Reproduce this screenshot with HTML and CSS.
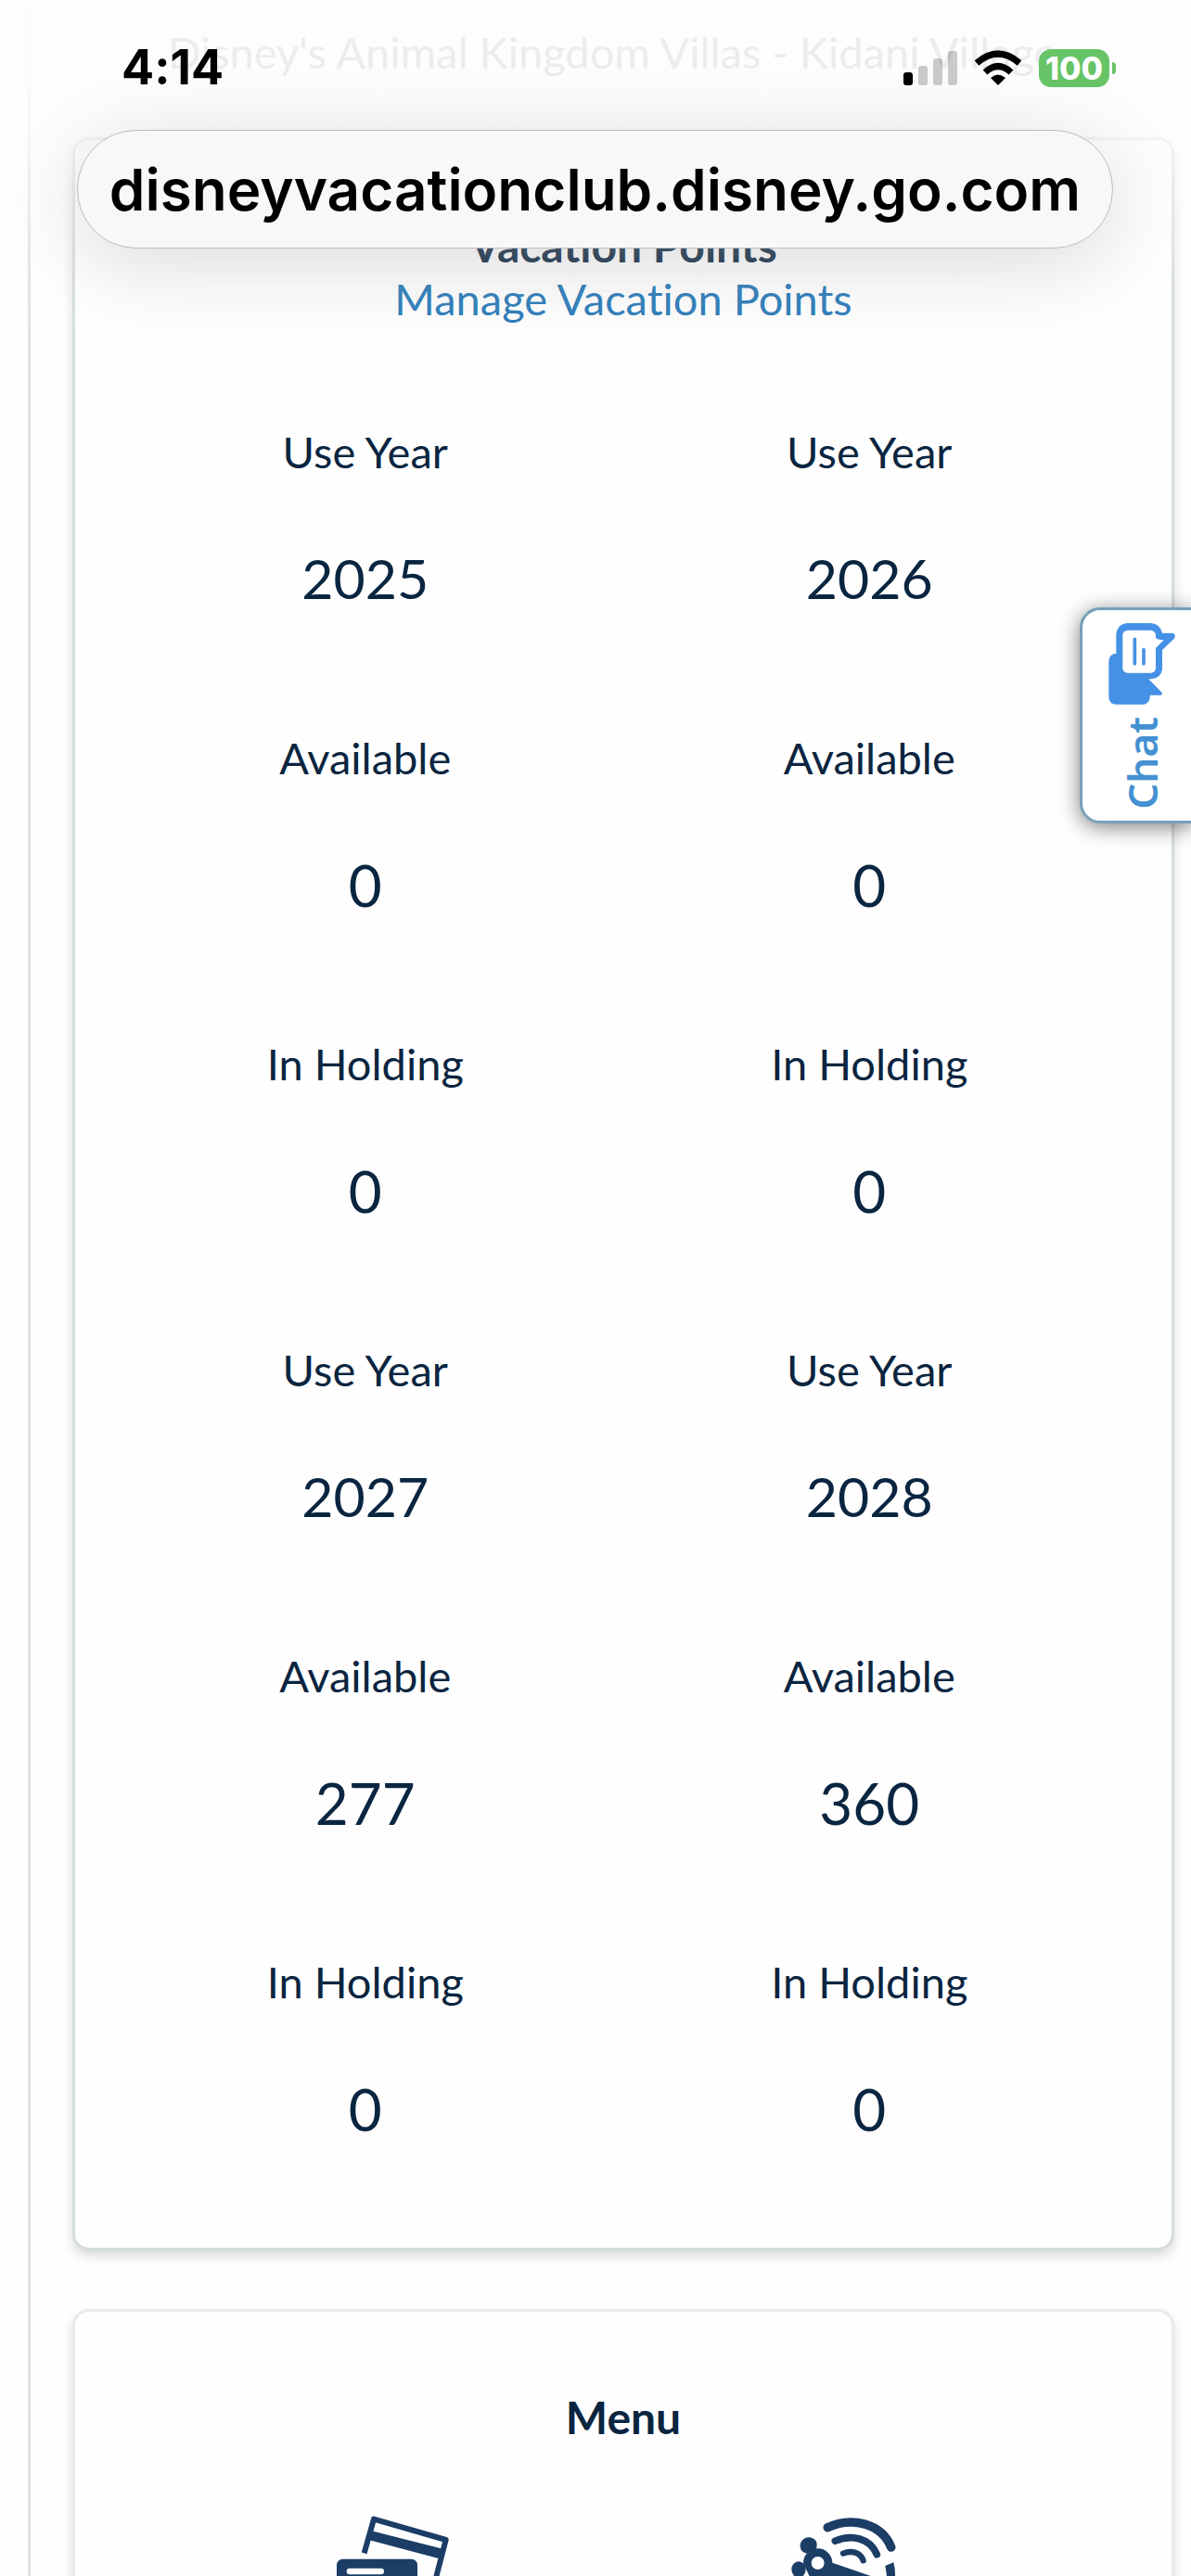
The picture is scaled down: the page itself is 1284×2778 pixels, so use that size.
FILE: index.html
```html
<!DOCTYPE html>
<html lang="en">
<head>
    <meta charset="UTF-8">
    <meta name="viewport" content="width=device-width, initial-scale=1.0">
    <title>Disney Vacation Club</title>

    <link rel="stylesheet" href="styles.css">
</head>
<body>
    <main class="page">
        <p class="resort">Disney's Animal Kingdom Villas - Kidani Village</p>

        <section class="card points">
            <h2>Vacation Points</h2>
            <a class="manage" href="#">Manage Vacation Points</a>

            <div class="years">
                <dl>
                    <dt>Use Year</dt>
                    <dd class="year">2025</dd>
                    <dt>Available</dt>
                    <dd>0</dd>
                    <dt>In Holding</dt>
                    <dd>0</dd>
                </dl>
                <dl>
                    <dt>Use Year</dt>
                    <dd class="year">2026</dd>
                    <dt>Available</dt>
                    <dd>0</dd>
                    <dt>In Holding</dt>
                    <dd>0</dd>
                </dl>
                <dl>
                    <dt>Use Year</dt>
                    <dd class="year">2027</dd>
                    <dt>Available</dt>
                    <dd>277</dd>
                    <dt>In Holding</dt>
                    <dd>0</dd>
                </dl>
                <dl>
                    <dt>Use Year</dt>
                    <dd class="year">2028</dd>
                    <dt>Available</dt>
                    <dd>360</dd>
                    <dt>In Holding</dt>
                    <dd>0</dd>
                </dl>
            </div>
        </section>

        <section class="card menu">
            <h2>Menu</h2>
            <nav class="menu-links">
                <a href="#" aria-label="Payments">
                    <svg width="124" height="110" viewBox="60 100 372 330">
                        <path d="M152 221 183 111 416 178 366 370" fill="none" stroke="#1b3d66" stroke-width="18" stroke-linejoin="round"/>
                        <path d="M172 148 412 209 400 240 166 178z" fill="#1b3d66"/>
                        <rect x="63" y="240" width="261" height="180" rx="20" fill="#1b3d66"/>
                        <rect x="95" y="270" width="121" height="20" rx="10" fill="#fff"/>
                    </svg>
                </a>
                <a href="#" aria-label="MagicBands">
                    <svg width="124" height="110" viewBox="55 100 372 330">
                        <g fill="none" stroke="#1b3d66" stroke-linecap="round">
                            <path d="M191 138C270 102 365 125 396 202" stroke-width="29"/>
                            <path d="M215 182C268 159 328 172 350 225" stroke-width="23"/>
                            <path d="M241 222C268 211 296 218 306 245" stroke-width="19"/>
                        </g>
                        <g fill="#1b3d66">
                            <ellipse cx="129" cy="196" rx="28" ry="26" transform="rotate(-30 129 196)"/>
                            <ellipse cx="97" cy="274" rx="23" ry="26"/>
                            <path d="M112 254a47 47 0 0 1 94-2l130 45v120H190z"/>
                            <path d="M377 262 404 251Q412 280 408 320H385Q382 290 377 262z"/>
                        </g>
                        <circle cx="159" cy="253" r="21" fill="#fff"/>
                    </svg>
                </a>
            </nav>
        </section>
    </main>

    <button class="chat">
        <svg width="74" height="90" viewBox="183 120 222 270">
            <path d="M214 221Q187 221 187 248V359Q187 386 214 386H296Q320 386 321 356H356Q363 352 357 346L318 306 310 280H228V221z" fill="#4591e6"/>
            <path d="M249 123H322Q352 123 360 155H392Q405 157 400 172L360 210V273Q355 302 325 304H240Q222 295 211 270V161Q214 125 249 123z" fill="#4591e6"/>
            <path d="M249 146H322Q337 148 339 161V170Q343 177 365 177L339 204V270Q337 282 325 284H248Q234 283 232 270V161Q233 148 249 146z" fill="#fff"/>
            <path d="M271 175V254M300 209V254" stroke="#4591e6" stroke-width="11" stroke-linecap="round"/>
        </svg>
        <span>Chat</span>
    </button>

    <header class="browser">
        <div class="status">
            <time>4:14</time>
            <div class="indicators">
                <svg width="58" height="38" viewBox="0 0 58 38">
                    <rect y="24" width="10" height="14" rx="3"/>
                    <g fill="#000" fill-opacity=".2">
                        <rect x="16" y="17" width="10" height="21" rx="3"/>
                        <rect x="32" y="9" width="10" height="29" rx="3"/>
                        <rect x="48" y="1" width="10" height="37" rx="3"/>
                    </g>
                </svg>
                <svg width="50" height="38" viewBox="0 0 50 38">
                    <g fill="none" stroke="#000" stroke-width="7">
                        <path d="M2 14Q25-6 48 14"/>
                        <path d="M11 24Q25 11 39 24"/>
                    </g>
                    <path d="M17 30Q25 23 33 30L25 38z"/>
                </svg>
                <div class="battery">100</div>
            </div>
        </div>
        <button class="address">disneyvacationclub.disney.go.com</button>
    </header>
</body>
</html>
```
FILE: styles.css
```css
* {
    box-sizing: border-box;
}

body {
    margin: 0;
    height: 100vh;
    overflow: hidden;
    position: relative;
    background-color: #fefefe;
    color: #0a2540;
    font-family: Lato, sans-serif;
    font-size: 47px;
    font-variant-ligatures: none;
    line-height: 60px;
    text-align: center;
}

h2,
p,
dl,
dd {
    margin: 0;
}

h2 {
    font-size: 48px;
    font-weight: bold;
}

a {
    color: #287ab8;
    text-decoration: none;
}

button {
    padding: 0;
    cursor: pointer;
}

.page {
    margin-left: 30px;
    padding: 26px 18px 0 45px;
    border-left: 3px solid #dfe1e2;
}

.resort {
    margin-right: 24px;
    white-space: nowrap;
}

.card {
    border: 3px solid #d5dce0;
    border-radius: 18px;
    background-color: #fefefe;
    box-shadow: 0 6px 12px rgba(0, 0, 0, 0.14);
}

.points {
    margin-top: 62px;
    padding: 84px 0 120px;
}

.manage {
    display: block;
    line-height: 54px;
}

.years {
    display: grid;
    grid-template-columns: 1fr 1fr;
    row-gap: 133px;
    padding: 108px 54px 0 41px;
}

dd {
    margin-top: 77px;
    font-size: 62px;
}

.year {
    font-size: 59px;
}

dd + dt {
    margin-top: 133px;
}

.menu {
    margin-top: 63px;
    border-color: #e6ebef;
    padding: 84px 0;
}

.menu-links {
    display: grid;
    grid-template-columns: 1fr 1fr;
    margin-top: 76px;
    padding: 0 112px 0 101px;
}

.menu-links svg {
    display: block;
    margin: 0 auto;
}

/* browser chrome that floats over the page */
.browser {
    position: absolute;
    top: 0;
    left: 0;
    right: 0;
    height: 380px;
    padding: 43px 84px 0 83px;
    background: linear-gradient(rgba(253, 253, 253, 0.93) 0, rgba(253, 253, 253, 0.92) 80px, rgba(253, 253, 253, 0.6) 180px, rgba(253, 253, 253, 0.1) 300px, rgba(253, 253, 253, 0) 380px);
    font-family: Inter, sans-serif;
    color: #000;
    pointer-events: none;
}

.status {
    display: flex;
    justify-content: space-between;
    align-items: center;
    padding: 0 0 0 48px;
}

.status time {
    font-size: 52px;
    font-weight: 700;
}

.indicators {
    display: flex;
    align-items: center;
    gap: 19px;
}

.battery {
    position: relative;
    width: 76px;
    height: 41px;
    margin-right: 4px;
    border-radius: 13px;
    background-color: #66c466;
    color: #fff;
    font-size: 34px;
    font-weight: 800;
    line-height: 41px;
}

.battery::after {
    content: "";
    position: absolute;
    top: 14px;
    right: -7px;
    width: 4px;
    height: 13px;
    border-radius: 0 4px 4px 0;
    background-color: #66c466;
}

.address {
    display: block;
    width: 100%;
    height: 128px;
    margin-top: 37px;
    border: 1px solid #bcbcbc;
    border-radius: 64px;
    background-color: #f8f8f8;
    box-shadow: 0 16px 90px rgba(0, 0, 0, 0.14);
    color: #000;
    font-family: Inter, sans-serif;
    font-size: 62px;
    font-weight: 600;
    pointer-events: auto;
}

.chat {
    position: absolute;
    top: 655px;
    right: -3px;
    width: 123px;
    height: 233px;
    display: flex;
    flex-direction: column;
    align-items: center;
    gap: 12px;
    padding: 13px 0 0 10px;
    border: 3px solid #76a0ba;
    border-radius: 22px 0 0 22px;
    background-color: #fff;
    box-shadow: 0 4px 22px rgba(0, 0, 0, 0.5);
    color: #4490d2;
    font-family: "Noto Sans", sans-serif;
    font-size: 44px;
    font-weight: 600;
    line-height: 60px;
}

/* reads from bottom to top */
.chat span {
    writing-mode: vertical-rl;
    transform: rotate(180deg);
}
```
